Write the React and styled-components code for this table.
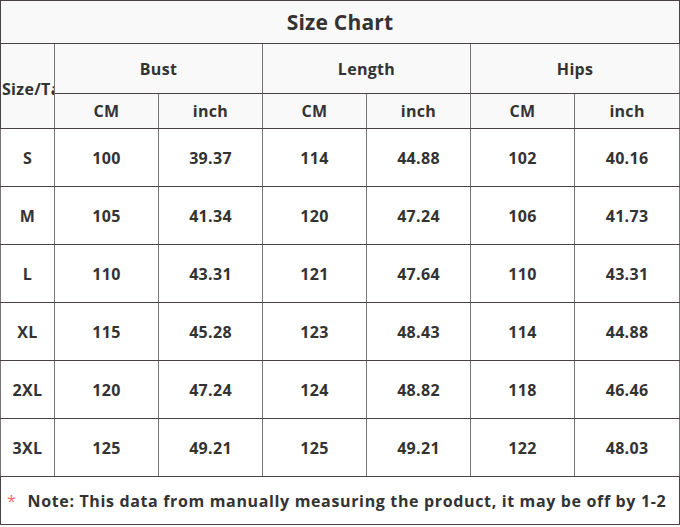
import React from 'react';
import styled, {createGlobalStyle} from 'styled-components';

const GlobalStyle = createGlobalStyle`
  body {
    margin: 0;
    background: #fff;
    font-family: "Open Sans", "Liberation Sans", sans-serif;
    color: #333;
  }
`;

const Table = styled.table`
  border-collapse: collapse;
  table-layout: fixed;
  width: 679px;
  font-weight: 700;
  font-size: 16px;
  letter-spacing: 0.3px;
`;

const Col = styled.col`
  width: ${p => p.$w}px;
`;

const Cell = styled.td`
  border-top: 1px solid #4a4343;
  border-bottom: 1px solid #4a4343;
  border-left: 1px solid #7a7474;
  border-right: 1px solid #7a7474;
  text-align: center;
  padding: 0;
  height: ${p => p.$h}px;
  background: ${p => (p.$head ? '#f9f9f9' : '#fff')};
  white-space: nowrap;
  overflow: hidden;
`;

const TitleCell = styled(Cell)`
  font-size: 21px;
  letter-spacing: 0.2px;
  border-left-color: #4a4343;
  border-right-color: #4a4343;
`;

const SizeHead = styled(Cell)`
  text-align: left;
  text-overflow: clip;
  padding-left: 1px;
  padding-top: 5px;
  border-left-color: #4a4343;
`;

const NoteCell = styled(Cell)`
  text-align: left;
  padding-left: 6px;
  letter-spacing: 0.65px;
  border-left-color: #4a4343;
  border-right-color: #4a4343;
`;

const Star = styled.span`
  color: #f06a6a;
  font-weight: 400;
  margin-right: 11px;
`;

const widths = [54, 104, 104, 104, 104, 104, 105];

const rows = [
  ['S', 100, '39.37', 114, '44.88', 102, '40.16'],
  ['M', 105, '41.34', 120, '47.24', 106, '41.73'],
  ['L', 110, '43.31', 121, '47.64', 110, '43.31'],
  ['XL', 115, '45.28', 123, '48.43', 114, '44.88'],
  ['2XL', 120, '47.24', 124, '48.82', 118, '46.46'],
  ['3XL', 125, '49.21', 125, '49.21', 122, '48.03'],
];

const App = () => (
  <>
    <GlobalStyle/>
    <Table>
      <colgroup>
        {widths.map((w, i) => <Col key={i} $w={w}/>)}
      </colgroup>
      <tbody>
        <tr>
          <TitleCell as="th" colSpan={7} $h={42} $head>Size Chart</TitleCell>
        </tr>
        <tr>
          <SizeHead rowSpan={2} $head>Size/Tag</SizeHead>
          <Cell colSpan={2} $h={49} $head>Bust</Cell>
          <Cell colSpan={2} $h={49} $head>Length</Cell>
          <Cell colSpan={2} $h={49} $head>Hips</Cell>
        </tr>
        <tr>
          {['CM', 'inch', 'CM', 'inch', 'CM', 'inch'].map((t, i) => (
            <Cell key={i} $h={34} $head>{t}</Cell>
          ))}
        </tr>
        {rows.map(r => (
          <tr key={r[0]}>
            {r.map((v, i) => (
              <Cell key={i} $h={57}>{v}</Cell>
            ))}
          </tr>
        ))}
        <tr>
          <NoteCell colSpan={7} $h={47}>
            <Star>*</Star>Note: This data from manually measuring the product, it may be off by 1-2
          </NoteCell>
        </tr>
      </tbody>
    </Table>
  </>
);

export default App;
